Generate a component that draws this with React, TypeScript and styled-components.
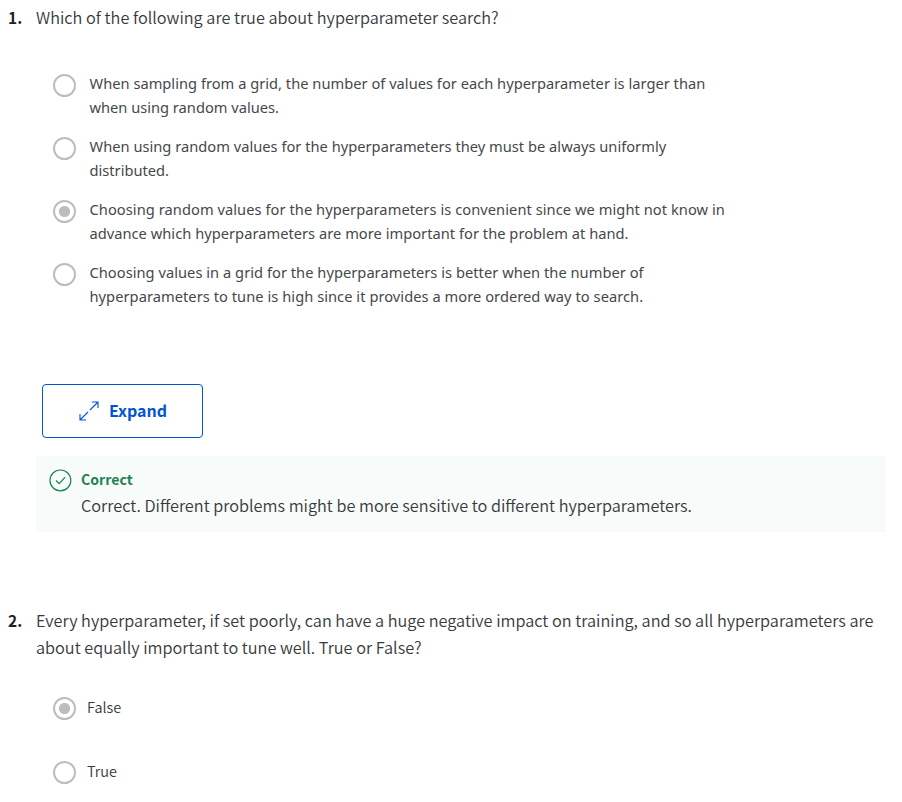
import React from "react";
import styled, { createGlobalStyle } from "styled-components";

const Global = createGlobalStyle`
  * { box-sizing: border-box; }
  body { margin: 0; background: #fff; color: #373a3c; overflow: hidden;
    font-family: "Noto Sans CJK SC", "Source Sans Pro", sans-serif; }
  p { margin: 0; }
`;
const Page = styled.main`
  width: 902px; height: 802px; overflow: hidden; padding: 4px 16px 0 8px;
`;
const Question = styled.section<{ $top?: number }>`
  display: grid; grid-template-columns: 28px 1fr; margin-top: ${(p) => p.$top ?? 0}px;
`;
const Index = styled.span`
  font-weight: 700; font-size: 15.5px; line-height: 27px; color: #1f1f1f;
`;
const Prompt = styled.p`
  font-size: 16.28px; font-weight: 350; line-height: 27px; white-space: nowrap;
`;
const Line = styled.span<{ $ls?: number }>`
  display: block; width: max-content; letter-spacing: ${(p) => p.$ls ?? 0}px;
`;
const Options = styled.div<{ $top: number; $gap: number }>`
  display: flex; flex-direction: column; gap: ${(p) => p.$gap}px;
  margin: ${(p) => p.$top}px 0 0 17px;
`;
const Option = styled.label<{ $gap: number }>`
  display: flex; align-items: flex-start; gap: ${(p) => p.$gap}px;
`;
const Radio = styled.span<{ $on?: boolean }>`
  flex: none; width: 23px; height: 23px; margin-top: 3px; border: 2px solid #bdbdbd; border-radius: 50%;
  background: ${(p) => (p.$on ? "radial-gradient(circle, #bdbdbd 5.2px, transparent 6px)" : "#fff")};
`;
const LongText = styled.span`
  font-family: "Noto Sans", sans-serif; font-size: 14.65px; line-height: 24px; white-space: nowrap;
  color: #45484a;
`;
const ShortText = styled.span`
  margin-top: 1px; font-size: 14.5px; font-weight: 350; line-height: 24px;
`;
const ExpandButton = styled.button`
  display: flex; align-items: center; justify-content: center; gap: 10px;
  width: 161px; height: 54px; margin: 76px 0 0 6px; padding: 0 0 2px 1px; background: #fff;
  border: 1px solid #0056d2; border-radius: 4px; color: #0056d2;
  font-family: inherit; font-size: 16px; font-weight: 700; line-height: 24px;
`;
const Feedback = styled.div`
  display: flex; gap: 9px; width: 850px; height: 76px; margin-top: 18px; padding: 10px 13px;
  background: #f7fbfa;
`;
const FeedbackTitle = styled.p`
  font-size: 14.1px; font-weight: 700; line-height: 26px; color: #1f8354;
`;
const FeedbackText = styled.p`
  font-size: 16.28px; font-weight: 350; line-height: 27px; white-space: nowrap;
`;
const Drawing = styled.svg<{ $top: number }>`
  flex: none; display: block; fill: none; margin-top: ${(p) => p.$top}px;
`;

const ExpandIcon = () => (
  <Drawing $top={2} width="20" height="20" viewBox="0 0 20 20" stroke="#0056d2" strokeWidth="1.1">
    <path d="M11 9 19 1M13 1h6v6M9 11 1 19M1 13v6h6" />
  </Drawing>
);
const CheckIcon = () => (
  <Drawing $top={3} width="23" height="23" viewBox="0 0 23 23" stroke="#1f8354" strokeWidth="1.2">
    <circle cx="11.4" cy="11.4" r="10.4" />
    <path d="m7 11.5 3.2 3.2 5.9-6.5" />
  </Drawing>
);

type Text = [string, number];
const choices: { on?: boolean; lines: Text[] }[] = [
  { lines: [["When sampling from a grid, the number of values for each hyperparameter is larger than", 0.02], ["when using random values.", 0]] },
  { lines: [["When using random values for the hyperparameters they must be always uniformly", 0.02], ["distributed.", 0]] },
  { on: true, lines: [["Choosing random values for the hyperparameters is convenient since we might not know in", 0.06], ["advance which hyperparameters are more important for the problem at hand.", 0.03]] },
  { lines: [["Choosing values in a grid for the hyperparameters is better when the number of", 0.035], ["hyperparameters to tune is high since it provides a more ordered way to search.", 0.05]] },
];

export default function App() {
  return (
    <Page>
      <Global />
      <Question>
        <Index>1.</Index>
        <div>
          <Prompt><Line>Which of the following are true about hyperparameter search?</Line></Prompt>
          <Options $top={40} $gap={15}>
            {choices.map((c) => (
              <Option key={c.lines[0][0]} $gap={13.5}>
                <Radio $on={c.on} />
                <LongText>{c.lines.map(([t, ls]) => <Line key={t} $ls={ls}>{t}</Line>)}</LongText>
              </Option>
            ))}
          </Options>
          <ExpandButton><ExpandIcon />Expand</ExpandButton>
          <Feedback>
            <CheckIcon />
            <div>
              <FeedbackTitle>Correct</FeedbackTitle>
              <FeedbackText><Line>Correct. Different problems might be more sensitive to different hyperparameters.</Line></FeedbackText>
            </div>
          </Feedback>
        </div>
      </Question>
      <Question $top={75}>
        <Index>2.</Index>
        <div>
          <Prompt>
            <Line>Every hyperparameter, if set poorly, can have a huge negative impact on training, and so all hyperparameters are</Line>
            <Line>about equally important to tune well. True or False?</Line>
          </Prompt>
          <Options $top={33} $gap={38}>
            <Option $gap={11}><Radio $on /><ShortText>False</ShortText></Option>
            <Option $gap={11}><Radio /><ShortText>True</ShortText></Option>
          </Options>
        </div>
      </Question>
    </Page>
  );
}
